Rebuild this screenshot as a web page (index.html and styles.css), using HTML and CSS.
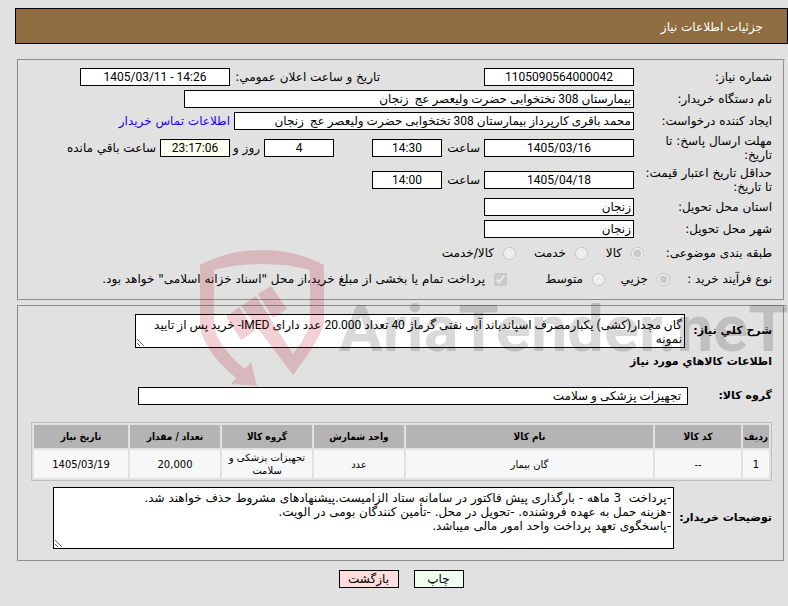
FILE: index.html
```html
<!DOCTYPE html>
<html lang="fa" dir="rtl">
<head>
    <meta charset="UTF-8">
    <meta name="viewport" content="width=device-width, initial-scale=1.0">
    <title>جزئیات اطلاعات نیاز</title>
    <link rel="stylesheet" href="styles.css">
</head>
<body>
    <header class="title-bar">جزئیات اطلاعات نیاز</header>

    <main>
        <section class="panel">
            <div class="row">
                <label class="name" for="need-no">شماره نیاز:</label>
                <input class="date" id="need-no" type="text" value="1105090564000042" readonly>
                <label class="announce" for="announce">تاریخ و ساعت اعلان عمومي:</label>
                <input class="date" id="announce" type="text" dir="ltr" value="1405/03/11 - 14:26" readonly>
            </div>
            <div class="row">
                <label class="name" for="buyer">نام دستگاه خریدار:</label>
                <input class="buyer" id="buyer" type="text" value="بیمارستان 308 تختخوابی حضرت ولیعصر عج  زنجان" readonly>
            </div>
            <div class="row">
                <label class="name" for="creator">ایجاد کننده درخواست:</label>
                <input class="creator" id="creator" type="text" value="محمد باقری کارپرداز بیمارستان 308 تختخوابی حضرت ولیعصر عج  زنجان" readonly>
                <a href="#">اطلاعات تماس خریدار</a>
            </div>
            <div class="row tall">
                <label class="name" for="reply-date">مهلت ارسال پاسخ: تا تاریخ:</label>
                <input class="date" id="reply-date" type="text" value="1405/03/16" readonly>
                <label class="at" for="reply-time">ساعت</label>
                <input class="time" id="reply-time" type="text" value="14:30" readonly>
                <input class="time days" id="days" type="text" value="4" readonly>
                <label class="and" for="days">روز و</label>
                <input class="time left" id="left" type="text" value="23:17:06" readonly>
                <label for="left">ساعت باقي مانده</label>
            </div>
            <div class="row tall">
                <label class="name" for="price-date">حداقل تاریخ اعتبار قیمت: تا تاریخ:</label>
                <input class="date" id="price-date" type="text" value="1405/04/18" readonly>
                <label class="at" for="price-time">ساعت</label>
                <input class="time" id="price-time" type="text" value="14:00" readonly>
            </div>
            <div class="row">
                <label class="name" for="province">استان محل تحویل:</label>
                <input class="place" id="province" type="text" value="زنجان" readonly>
            </div>
            <div class="row">
                <label class="name" for="city">شهر محل تحویل:</label>
                <input class="place" id="city" type="text" value="زنجان" readonly>
            </div>
            <div class="choices subject">
                <span>طبقه بندی موضوعی:</span>
                <label><input type="radio" name="subject" checked disabled> کالا</label>
                <label><input type="radio" name="subject" disabled> خدمت</label>
                <label><input type="radio" name="subject" disabled> کالا/خدمت</label>
            </div>
            <div class="choices process">
                <span>نوع فرآیند خرید :</span>
                <label><input type="radio" name="process" checked disabled> جزیي</label>
                <label><input type="radio" name="process" disabled> متوسط</label>
                <label><input type="checkbox" checked disabled> پرداخت تمام یا بخشی از مبلغ خرید،از محل "اسناد خزانه اسلامی" خواهد بود.</label>
            </div>
        </section>

        <section class="panel details">
            <div class="row summary">
                <label for="summary">شرح کلي نیاز:</label>
                <textarea id="summary" readonly>گان مچدار(کشی) یکبارمصرف اسپاندباند آبی نفتی گرماژ 40 تعداد 20.000 عدد دارای IMED- خرید پس از تایید نمونه</textarea>
            </div>
            <h2>اطلاعات کالاهاي مورد نیاز</h2>
            <div class="row group">
                <label for="group">گروه کالا:</label>
                <input id="group" type="text" value="تجهیزات پزشکی و سلامت" readonly>
            </div>
            <table>
                <thead>
                    <tr>
                        <th class="c-row">ردیف</th>
                        <th class="c-code">کد کالا</th>
                        <th>نام کالا</th>
                        <th class="c-mid">واحد شمارش</th>
                        <th class="c-mid">گروه کالا</th>
                        <th class="c-mid">تعداد / مقدار</th>
                        <th class="c-date">تاریخ نیاز</th>
                    </tr>
                </thead>
                <tbody>
                    <tr>
                        <td>1</td>
                        <td>--</td>
                        <td>گان بیمار</td>
                        <td>عدد</td>
                        <td>تجهیزات پزشکی و سلامت</td>
                        <td>20,000</td>
                        <td>1405/03/19</td>
                    </tr>
                </tbody>
            </table>
            <div class="row notes">
                <label for="notes">توضیحات خریدار:</label>
                <textarea id="notes" readonly>-پرداخت  3 ماهه - بارگذاری پیش فاکتور در سامانه ستاد الزامیست.پیشنهادهای مشروط حذف خواهند شد.
-هزینه حمل به عهده فروشنده. -تحویل در محل. -تأمین کنندگان بومی در الویت.
-پاسخگوی تعهد پرداخت واحد امور مالی میباشد.</textarea>
            </div>
        </section>

        <div class="buttons">
            <button class="print" type="button">چاپ</button>
            <button class="back" type="button">بازگشت</button>
        </div>
    </main>

    <svg class="watermark" width="588" height="150" viewBox="0 0 588 150" direction="ltr">
        <g fill="#b40014" fill-opacity="0.18">
            <path d="M0 20Q28 5 62 5T124 20V77Q122 92 93 130L41 61L56 51L93 109Q109 88 110 77V25Q90 19 62 19T14 25V77Q15 100 45 124L51 117L57 141L31 139L36 133Q0 103 0 77Z"/>
            <path d="M58 49L71 41L87 64L73 73Z"/>
            <path d="M26 72L39 62L55 86L41 95Z"/>
        </g>
        <text x="139" y="106">AriaTender.neT</text>
    </svg>
</body>
</html>
```
FILE: styles.css
```css
body {
    position: relative;
    margin: 8px 0 0 15px;
    background-color: #e1e1e1;
    color: #000;
    font-family: "DejaVu Sans", sans-serif;
    font-size: 12px;
    line-height: 14px;
    overflow-x: hidden;
}
.title-bar {
    padding: 11px 24px 9px;
    border: 1px solid #000;
    background-color: #8f6d40;
    color: #fff;
}
main {
    padding: 15px 3px 0 2px;
}
input, textarea, button {
    box-sizing: border-box;
    font: inherit;
    color: inherit;
}
input[type="text"], textarea {
    margin: 0;
    border: 1px solid #000;
    border-radius: 0;
    background-color: #fff;
}
input[type="text"] {
    height: 18px;
    padding: 0 2px;
    font-family: Roboto, "DejaVu Sans", sans-serif;
}
.panel {
    padding: 5px 11px 7px 12px;
    border: 2px groove #e1e1e1;
}
.row {
    display: flex;
    align-items: center;
    gap: 4px;
    min-height: 22px;
}
.row.tall {
    min-height: 32px;
}
.name {
    width: 134px;
    box-sizing: border-box;
    padding-left: 6px;
}
.row .date {
    width: 150px;
    text-align: center;
}
.row .time {
    width: 70px;
    padding: 0;
    text-align: center;
}
.announce {
    width: 146px;
    margin-right: 100px;
    white-space: nowrap;
}
.buyer {
    width: 450px;
}
.creator {
    width: 400px;
}
.place {
    width: 150px;
}
.at {
    width: 34px;
}
.and {
    width: 26px;
    white-space: nowrap;
}
.row .days {
    margin-right: 34px;
}
.row .left {
    background-color: #fffff0;
}
a {
    color: #1a00ff;
    text-decoration: none;
}
.choices {
    display: grid;
    align-items: center;
    height: 26px;
    white-space: nowrap;
}
.choices.subject {
    grid-template-columns: 128px 56px 72px 1fr;
}
.choices.process {
    grid-template-columns: 102px 65px 98px 1fr;
}
.choices label {
    display: flex;
    align-items: center;
    gap: 9px;
}
.choices input {
    width: 13px;
    height: 13px;
    margin: 0;
}
.details {
    margin-top: 4px;
    padding-top: 7px;
    padding-bottom: 11px;
}
.details label, h2 {
    font-size: 11px;
    font-weight: bold;
    white-space: nowrap;
}
textarea {
    padding: 3px 2px;
    resize: both;
    overflow: auto;
}
.summary label {
    width: 83px;
}
.summary textarea {
    width: 550px;
    height: 34px;
    font-family: Roboto, "DejaVu Sans", sans-serif;
}
h2 {
    margin: 7px 0 16px;
}
.group label {
    width: 80px;
}
.row.group input {
    width: 550px;
    padding: 0 6px;
}
table {
    width: 100%;
    margin: 15px 0 6px;
    border: 1px solid #c0c0c0;
    border-spacing: 2px;
    table-layout: fixed;
    font-size: 10px;
    line-height: 13px;
    text-align: center;
}
th, td {
    padding: 0;
}
th {
    height: 23px;
    background-color: #b4b4b4;
    font-family: "DejaVu Sans Condensed", "DejaVu Sans", sans-serif;
}
td {
    height: 28px;
    background-color: #f7f7f7;
}
.c-row {
    width: 26px;
}
.c-code {
    width: 86px;
}
.c-mid {
    width: 90px;
}
.c-date {
    width: 94px;
}
.notes label {
    width: 94px;
}
.notes textarea {
    flex: 1;
    height: 62px;
    margin-left: 22px;
}
.buttons {
    display: flex;
    justify-content: center;
    gap: 15px;
    padding-top: 8px;
}
button {
    height: 18px;
    padding: 0;
    border: 1px solid #000;
}
.print {
    width: 50px;
    background-color: #f0fff0;
}
.back {
    width: 60px;
    background-color: #ffdddd;
}
.watermark {
    position: absolute;
    top: 237px;
    left: 185px;
    pointer-events: none;
}
.watermark text {
    font-family: Roboto, sans-serif;
    font-size: 65px;
    font-weight: bold;
    fill: #000;
    fill-opacity: 0.15;
}
```
